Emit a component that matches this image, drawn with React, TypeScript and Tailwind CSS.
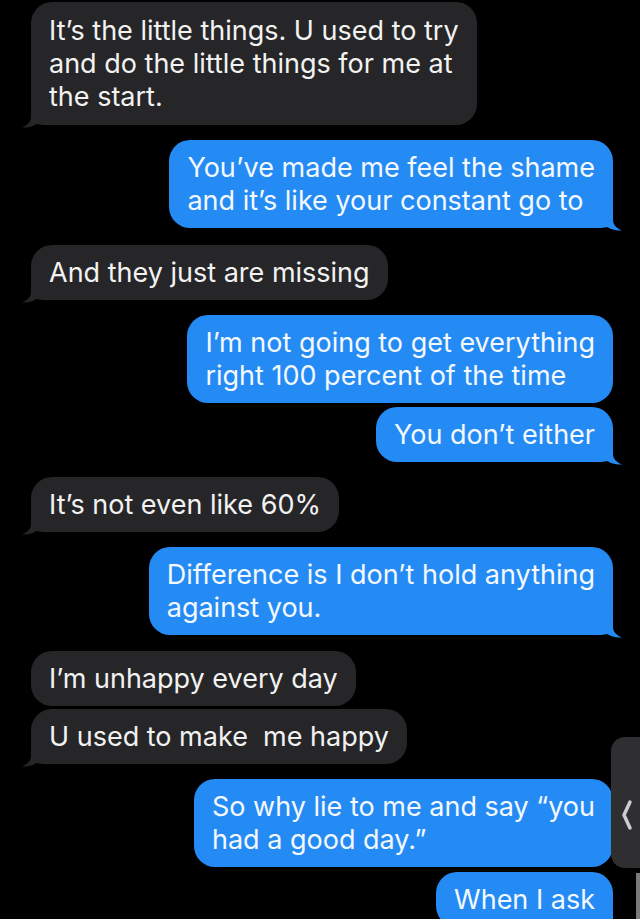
import React from "react";

type Msg = { from: "them" | "me"; lines: string[]; tail?: boolean; gap: number; pad?: number };

const messages: Msg[] = [
  { from: "them", lines: ["It’s the little things. U used to try", "and do the little things for me at", "the start."], tail: true, gap: 2, pad: 12 },
  { from: "me", lines: ["You’ve made me feel the shame", "and it’s like your constant go to"], tail: true, gap: 15 },
  { from: "them", lines: ["And they just are missing"], tail: true, gap: 17 },
  { from: "me", lines: ["I’m not going to get everything", "right 100 percent of the time"], gap: 15 },
  { from: "me", lines: ["You don’t either"], tail: true, gap: 4 },
  { from: "them", lines: ["It’s not even like 60%"], tail: true, gap: 15 },
  { from: "me", lines: ["Difference is I don’t hold anything", "against you."], tail: true, gap: 15 },
  { from: "them", lines: ["I’m unhappy every day"], gap: 16 },
  { from: "them", lines: ["U used to make  me happy"], tail: true, gap: 3 },
  { from: "me", lines: ["So why lie to me and say “you", "had a good day.”"], gap: 15 },
  { from: "me", lines: ["When I ask"], tail: true, gap: 5 },
];

function Tail({ color, flip }: { color: string; flip?: boolean }) {
  return (
    <svg
      width="34"
      height="23"
      viewBox="0 0 34 23"
      className={`absolute bottom-[-3px] ${flip ? "right-[-9px] -scale-x-100" : "left-[-9px]"}`}
    >
      <path
        d="M9 0 L9 12 C9 17 5 20.5 0 22.5 C6 23 11 21.5 14.5 19 C18 20 22 20 34 20 L34 0 Z"
        fill={color}
      />
    </svg>
  );
}

function Bubble({ m }: { m: Msg }) {
  const mine = m.from === "me";
  const color = mine ? "#248bf4" : "#262628";
  const pad = m.pad ?? 11;
  return (
    <div className={`flex ${mine ? "justify-end" : "justify-start"}`} style={{ marginTop: m.gap }}>
      <div
        className={`relative rounded-[21px] px-[18px] text-[27px] leading-[33px] ${
          mine ? "bg-[#248bf4] text-[#f4f8ff]" : "bg-[#262628] text-[#f2f2f2]"
        }`}
        style={{ paddingTop: pad, paddingBottom: pad }}
      >
        {m.tail && <Tail color={color} flip={mine} />}
        <div className="relative whitespace-pre">
          {m.lines.map((l, i) => (
            <div key={i}>{l}</div>
          ))}
        </div>
      </div>
    </div>
  );
}

export default function App() {
  return (
    <div
      className="relative h-[919px] w-[640px] overflow-hidden bg-black"
      style={{ fontFamily: "Inter, 'Noto Sans', sans-serif" }}
    >
      <div className="flex flex-col pl-[31px] pr-[27px]">
        {messages.map((m, i) => (
          <Bubble key={i} m={m} />
        ))}
      </div>

      {/* side handle overlay */}
      <div className="absolute right-0 top-[737px] flex h-[131px] w-[29px] items-center justify-center rounded-l-[14px] bg-[#2f2f31]">
        <svg width="14" height="32" viewBox="0 0 14 32" className="ml-[2px] mt-[24px]">
          <path d="M10 3 L4 16 L10 29" stroke="#cdcdd1" strokeWidth="3.5" fill="none" strokeLinecap="round" strokeLinejoin="round" />
        </svg>
      </div>
      <div className="absolute right-0 top-[873px] h-[46px] w-[4px] bg-[#7a7a7c]" />
    </div>
  );
}
